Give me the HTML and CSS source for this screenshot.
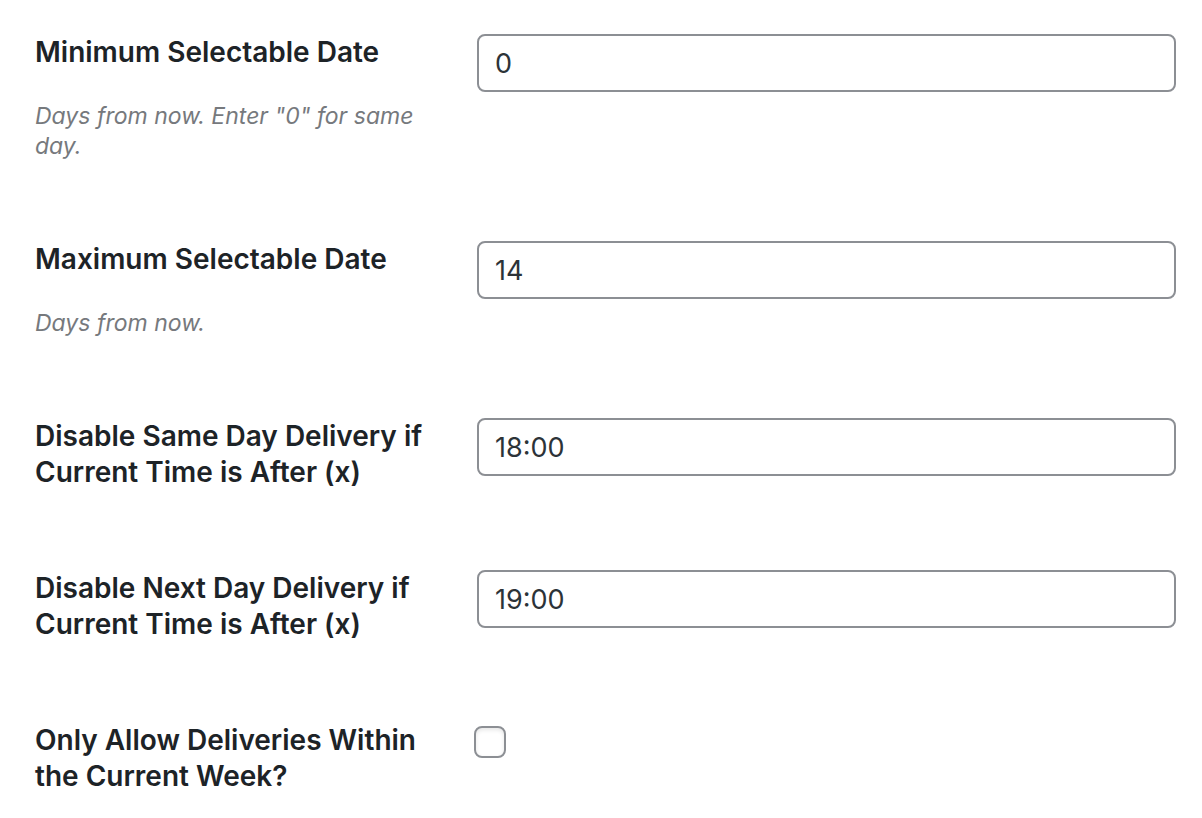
FILE: index.html
```html
<!DOCTYPE html>
<html lang="en">
<head>
    <meta charset="UTF-8">
    <title>Delivery Settings</title>
    <link rel="stylesheet" href="styles.css">
</head>
<body>
    <div class="form-table">
        <div class="row">
            <div class="row-head">
                <label class="label" for="min-date">Minimum Selectable Date</label>
                <p class="description">Days from now. Enter "0" for same day.</p>
            </div>
            <div class="row-field">
                <input class="text" id="min-date" type="text" value="0">
            </div>
        </div>
        <div class="row">
            <div class="row-head">
                <label class="label" for="max-date">Maximum Selectable Date</label>
                <p class="description">Days from now.</p>
            </div>
            <div class="row-field">
                <input class="text" id="max-date" type="text" value="14">
            </div>
        </div>
        <div class="row">
            <div class="row-head">
                <label class="label" for="same-day">Disable Same Day Delivery if Current Time is After (x)</label>
            </div>
            <div class="row-field">
                <input class="text" id="same-day" type="text" value="18:00">
            </div>
        </div>
        <div class="row">
            <div class="row-head">
                <label class="label" for="next-day">Disable Next Day Delivery if Current Time is After (x)</label>
            </div>
            <div class="row-field">
                <input class="text" id="next-day" type="text" value="19:00">
            </div>
        </div>
        <div class="row">
            <div class="row-head">
                <label class="label" for="this-week">Only Allow Deliveries Within the Current Week?</label>
            </div>
            <div class="row-field">
                <input class="check" id="this-week" type="checkbox">
            </div>
        </div>
    </div>
</body>
</html>
```

FILE: styles.css
```css
*{
    margin: 0;
    padding: 0;
    box-sizing: border-box;
}
body{
    background: #fff;
    font-family: Inter, "Noto Sans", sans-serif;
    color: #1d2327;
}
.form-table{
    margin-top: -6px;
    padding-left: 35px;
}
.row{
    display: flex;
}
.row-head{
    width: 420px;
    flex: none;
    padding: 40px 20px 40px 0;
}
.label{
    display: block;
    font-size: 28px;
    line-height: 36px;
    font-weight: 600;
}
.description{
    margin-top: 31px;
    font-size: 23px;
    line-height: 30px;
    font-style: italic;
    color: #76797d;
}
.row-field{
    flex: 1;
    padding: 40px 28px 0 20px;
}
.text{
    display: block;
    width: 100%;
    height: 58px;
    margin: 0 2px;
    padding: 0 16px;
    border: 2px solid #8c8f94;
    border-radius: 8px;
    font-family: inherit;
    font-size: 27px;
    color: #2c3338;
    background: #fff;
    outline: none;
}
.check{
    display: block;
    appearance: none;
    width: 32px;
    height: 32px;
    margin: 4px 0 0 -1px;
    border: 2px solid #8c8f94;
    border-radius: 8px;
    background: #fff;
    box-shadow: inset 0 2px 4px rgba(0,0,0,0.1);
}
```
